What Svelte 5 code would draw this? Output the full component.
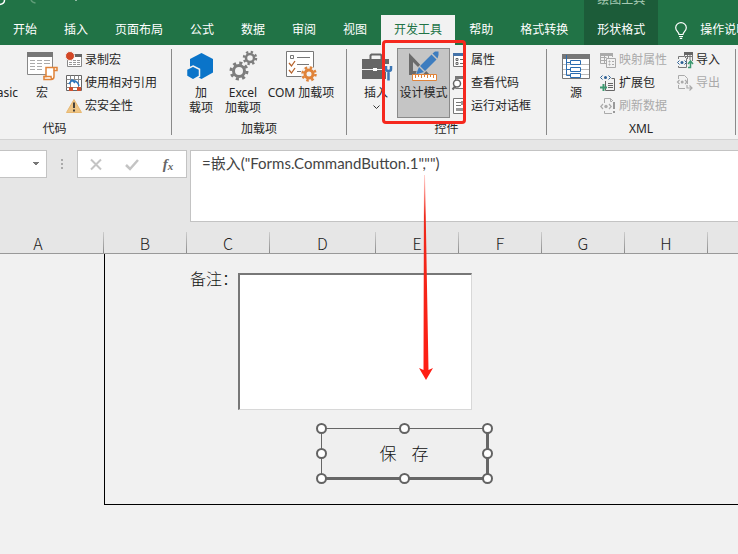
<script>
  const tabs = ['开始', '插入', '页面布局', '公式', '数据', '审阅', '视图', '开发工具', '帮助', '格式转换'];
  const columns = [
    { name: 'A', width: 131 },
    { name: 'B', width: 83 },
    { name: 'C', width: 83 },
    { name: 'D', width: 106 },
    { name: 'E', width: 83 },
    { name: 'F', width: 83 },
    { name: 'G', width: 83 },
    { name: 'H', width: 83 },
    { name: 'I', width: 83 }
  ];
  const handles = [
    [5.5, 5.5], [88.5, 5.5], [171.5, 5.5],
    [5.5, 30.5], [171.5, 30.5],
    [5.5, 55.5], [88.5, 55.5], [171.5, 55.5]
  ];
  let active = $state('开发工具');
  let formula = $state('=嵌入("Forms.CommandButton.1","")');
  let note = $state('');
</script>

{#snippet codeDoc(color, mark)}
  <path d="M4.500 5V.5h6l3 3V15.500h-9V13" fill="none" stroke={color} />
  <path d="M10.500.5v3h3" fill="none" stroke={color} />
  <path d="M3 6 .8 8.500 3 11M9 6l2.200 2.500L9 11" fill="none" stroke={mark} stroke-width="1.200" />
  <circle cx="6" cy="8.500" r="1.700" fill={mark} />
{/snippet}

<div class="app">
  <header class="top">
    <svg class="quick" width="90" height="6" viewBox="0 0 90 6" aria-hidden="true">
      <path d="M0 4.500C3 4 4.500 2.500 4.500 0" fill="none" stroke="#fff" stroke-width="1.500" />
      <path d="M31 0q1 2.500 4.500 3" fill="none" stroke="#5f9c78" stroke-width="1.500" />
      <path d="M75 0h2l-1 1z" fill="#fff" />
    </svg>
    <nav class="tabs">
      {#each tabs as tab}
        <button class="tab" class:active={active === tab} onclick={() => (active = tab)}>{tab}</button>
      {/each}
    </nav>
    <div class="context">
      <span class="context-title">绘图工具</span>
      <button class="tab">形状格式</button>
    </div>
    <button class="tell">
      <svg width="12" height="17" viewBox="0 0 12 17" fill="none" stroke="#fff" stroke-width="1.200" aria-hidden="true">
        <path d="M4 12.500c0-2.500-3.300-3.500-3.300-6.800a5.300 5 0 0 1 10.600 0c0 3.300-3.300 4.300-3.300 6.800zM4 14.500h4M4.800 16.300h2.400" />
      </svg>
      <span>操作说明搜索</span>
    </button>
  </header>

  <section class="ribbon">
    <div class="group code">
      <div class="items">
        <button class="big basic"><span class="pic"></span>Visual Basic</button>
        <button class="big macro">
          <svg class="pic" width="32" height="32" viewBox="0 0 32 32" aria-hidden="true">
            <path d="M1.500 3.500h25v22h-25z" fill="#fff" stroke="#888" />
            <path d="M1 3h26v5H1z" fill="#777" />
            <path d="M4 11.500h5m2 0h5m2 0h6M4 14.500h5m2 0h5m2 0h6M4 17.500h5m2 0h5M4 20.500h5m2 0h5" stroke="#aaa" />
            <path d="M20 18.500h11v3h-3v6q0 3-3 3h-7v-3h2z" fill="#fff" stroke="#e08339" stroke-width="1.500" />
            <path d="M17.500 27.500h7.500q0 3 2 2.500M28 21.500v-3" fill="none" stroke="#e08339" stroke-width="1.500" />
          </svg>
          宏
        </button>
        <div class="stack">
          <button class="row">
            <svg width="16" height="16" viewBox="0 0 16 16" aria-hidden="true">
              <path d="M1.500 2.500h14v12h-14z" fill="#fff" stroke="#888" />
              <path d="M8 2h8v3H8z" fill="#666" />
              <path d="M3 8.500h3m1 0h3m1 0h3M3 10.500h3m1 0h3m1 0h3M3 12.500h3m1 0h3m1 0h3" stroke="#999" />
              <circle cx="4" cy="4" r="4.500" fill="#d24726" stroke="#f2f2f2" />
            </svg>
            录制宏
          </button>
          <button class="row">
            <svg width="16" height="16" viewBox="0 0 16 16" aria-hidden="true">
              <path d="M.5.500h15v15H.500z" fill="#fff" stroke="#666" />
              <path d="M.5 4.500h15M4.500.500v15M8.500.500v4M12.500.500v15M.500 8.500h4M.500 12.500h15" stroke="#888" />
              <path d="M5 5h7v7H5z" fill="#fff" />
              <path d="M3 9l3-4 3 3M5.500 6q6-1 7.500 5" fill="none" stroke="#2b76bd" stroke-width="1.500" />
              <path d="M3 12h4v4H3zM11 12h4v4h-4z" fill="#d0502d" />
            </svg>
            使用相对引用
          </button>
          <button class="row">
            <svg width="16" height="16" viewBox="0 0 16 16" aria-hidden="true">
              <path d="M8 1.500 15.500 14.500H.500z" fill="#efc585" stroke="#e8b871" stroke-linejoin="round" />
              <path d="M8 4.500v5.500M8 11.500v2" stroke="#333" stroke-width="1.800" />
            </svg>
            宏安全性
          </button>
        </div>
      </div>
      <div class="caption">代码</div>
    </div>

    <div class="group addins">
      <div class="items">
        <button class="big addin">
          <svg class="pic" width="32" height="32" viewBox="0 0 32 32" aria-hidden="true">
            <path d="M16.500 4 28 10v13.500L16.500 30 5 23.500V10z" fill="#0a74c9" />
            <path d="m8 17 6.500 3.300v6.900L8 31l-6.500-3.800v-6.900z" fill="#0a74c9" stroke="#f2f2f2" stroke-width="1.500" />
          </svg>
          加<br />载项
        </button>
        <button class="big excel">
          <svg class="pic" width="32" height="32" viewBox="0 0 32 32" aria-hidden="true">
            <g fill="none" stroke="#7d7d7d">
              <circle cx="12" cy="22" r="5.500" stroke-width="3" />
              <circle cx="12" cy="22" r="8" stroke-width="3" stroke-dasharray="3.100 3.183" />
              <circle cx="23" cy="9" r="4" stroke-width="2.500" />
              <circle cx="23" cy="9" r="6" stroke-width="2.500" stroke-dasharray="2.300 2.412" />
            </g>
          </svg>
          Excel<br />加载项
        </button>
        <button class="big com">
          <svg class="pic" width="32" height="32" viewBox="0 0 32 32" aria-hidden="true">
            <path d="M1.500 2.500h27v25h-27z" fill="#fff" stroke="#777" />
            <path d="M5.500 6.500h3v3h-3zM12 8.500h13M12 15.500h12M12 22.500h4" fill="none" stroke="#777" />
            <path d="m4 14 2.500 3L10 12M4 21l2.500 3 3.500-5" fill="none" stroke="#b5622b" stroke-width="1.300" />
            <circle cx="24" cy="25" r="8" fill="#f2f2f2" />
            <circle cx="24" cy="25" r="4" fill="none" stroke="#e08339" stroke-width="3" />
            <circle cx="24" cy="25" r="6.500" fill="none" stroke="#e08339" stroke-width="2.500" stroke-dasharray="2.500 2.605" />
          </svg>
          COM 加载项
        </button>
      </div>
      <div class="caption">加载项</div>
    </div>

    <div class="group controls">
      <div class="items">
        <button class="big insert">
          <svg class="pic" width="32" height="32" viewBox="0 0 32 32" aria-hidden="true">
            <path d="M10.500 10V6.500l1-1h9l1 1V10" fill="none" stroke="#666" stroke-width="2" />
            <path d="M2 10h27v20H2z" fill="#666" />
            <path d="M2 20.500h11m4 0h11" stroke="#f2f2f2" />
            <path d="M13 19h4v3h-4z" fill="#fff" />
            <path d="M24 15v5q0 2 2 3v9h5v-9q2-1 2-3v-5z" fill="#f2f2f2" />
            <path d="M26 17v3q0 2 2.500 2t2.500-2v-3M28.500 21.500v10" fill="none" stroke="#3b76b5" stroke-width="2.500" />
          </svg>
          插入
          <svg class="chevron" width="7" height="4" viewBox="0 0 7 4" aria-hidden="true"><path d="m.5.500 3 3 3-3" fill="none" stroke="#333" /></svg>
        </button>
        <button class="big design" aria-pressed="true">
          <svg class="pic" width="32" height="32" viewBox="0 0 32 32" aria-hidden="true">
            <path d="M1 4v22h21zM5 13l9 9H5z" fill="#6b6b6b" fill-rule="evenodd" />
            <path d="m7 27 3-9L25 2.500l7 4L15.500 25z" fill="#c5c5c5" />
            <path d="m8 25.500 3-7.500 5 5zM12 17 23.500 5.500l5 5L17 22zM24.500 4.500 27 2.500h3.500V6l-1 3.500z" fill="#3e7dbf" />
            <path d="M4.500 25.500h24v6h-24z" fill="#fff" stroke="#e08339" />
            <path d="M7.500 26v3m3-3v2m3-2v3m3-3v2m3-2v3m3-3v2m3-2v3" stroke="#e08339" />
          </svg>
          设计模式
        </button>
        <div class="stack">
          <button class="row">
            <svg width="16" height="16" viewBox="0 0 16 16" aria-hidden="true">
              <path d="M1.500 1.500h12v13h-12z" fill="#fff" stroke="#777" />
              <path d="M1 1h13v3H1z" fill="#4472a8" />
              <path d="M4 6.500h2v2H4zM4 10.500h2v2H4zM8 7.500h4M8 11.500h4" fill="none" stroke="#666" />
            </svg>
            属性
          </button>
          <button class="row">
            <svg width="16" height="16" viewBox="0 0 16 16" aria-hidden="true">
              <path d="M3.500 1.500h10v12h-10z" fill="#fff" stroke="#777" />
              <path d="M3 1h11v3H3z" fill="#777" />
              <circle cx="5" cy="8.500" r="3.500" fill="#fff" stroke="#666" stroke-width="1.500" />
              <path d="m3 11.500-2.500 3" stroke="#666" stroke-width="2" />
            </svg>
            查看代码
          </button>
          <button class="row">
            <svg width="16" height="16" viewBox="0 0 16 16" aria-hidden="true">
              <path d="M1.500.500h12v15h-12z" fill="#fff" stroke="#777" />
              <path d="M4 4.500h5M4 7.500h5M4 10.500h4" stroke="#777" />
              <path d="M4 10h8v3H4zM9 3h3v4H9z" fill="#999" />
            </svg>
            运行对话框
          </button>
        </div>
      </div>
      <div class="caption">控件</div>
    </div>

    <div class="group xml">
      <div class="items">
        <button class="big source">
          <svg class="pic" width="32" height="32" viewBox="0 0 32 32" aria-hidden="true">
            <path d="M2.500 5.500h27v24h-27z" fill="#fff" stroke="#777" />
            <path d="M2 5h28v5H2z" fill="#777" />
            <path d="M3 15.500h26M3 20.500h26M3 25.500h26" stroke="#bbb" />
            <path d="M6.500 6v20.500H11M6.500 13.500H11M6.500 20.500H11" fill="none" stroke="#2b6cb0" />
            <path d="M10.500 11.500h10v4h-10zM10.500 18.500h10v4h-10zM10.500 24.500h10v4h-10z" fill="#fff" stroke="#2b6cb0" />
          </svg>
          源
        </button>
        <div class="stack second">
          <button class="row" disabled>
            <svg width="16" height="16" viewBox="0 0 16 16" fill="none" stroke="#aaa" aria-hidden="true">
              <path d="M6 11.500H.500v-10h12V5M.500 5.500h6M4.500 4v7M.500 8.500h6M8.500 4v2" />
              <path d="M0 1h13v3H0z" fill="#aaa" stroke="none" />
              <path d="M6.500 6.500h9v9h-9zM9 9h1v1H9zM9 12h1v1H9zM12 9.500h2M12 12.500h2" />
            </svg>
            映射属性
          </button>
          <button class="row">
            <svg width="16" height="16" viewBox="0 0 16 16" fill="none" aria-hidden="true">
              <path d="M5.500 6v9.500h9v-12h-3M8 8.500h5M8 10.500h5M8 12.500h5" stroke="#666" />
              <path d="M2.500.500.500 2.500l2 2M8.500.500l2 2-2 2" stroke="#2b5f94" />
              <circle cx="5.500" cy="2.500" r="1.500" fill="#2b5f94" />
              <path d="M3.500 9v7M0 12.500h7" stroke="#3d9970" stroke-width="2" />
            </svg>
            扩展包
          </button>
          <button class="row" disabled>
            <svg width="16" height="16" viewBox="0 0 16 16" aria-hidden="true">
              {@render codeDoc('#aaa', '#aaa')}
              <path d="M12 3h4v13h-4z" fill="#f2f2f2" />
              <path d="M14 4v7M14 13v2" stroke="#999" stroke-width="2" />
            </svg>
            刷新数据
          </button>
        </div>
        <div class="stack third">
          <button class="row">
            <svg width="16" height="16" viewBox="0 0 16 16" fill="none" aria-hidden="true">
              <path d="M7.500 4V1.500h8V9M8 4.500h7M10.500 2v5M13 2v6" stroke="#777" />
              <path d="M7 0h9v3H7z" fill="#666" />
              <path d="M1.500 7V4.500h6l2 2V15.500h-8V14" stroke="#777" />
              <path d="M2.500 8.500.500 10.500l2 2M7.500 8.500l2 2-2 2" stroke="#2b5f94" />
              <circle cx="5" cy="10.500" r="1.500" fill="#2b5f94" />
              <path d="M11 15.500h2.500V10M11 12l2.500-3 2.500 3" stroke="#3d9970" stroke-width="1.500" />
            </svg>
            导入
          </button>
          <button class="row" disabled>
            <svg width="16" height="16" viewBox="0 0 16 16" aria-hidden="true">
              <path d="M1.500 4V.500h6l3 3V9M1.500 10v3.500H8" fill="none" stroke="#aaa" />
              <path d="m2.500 5-2 2 2 2M8 5l2 2-2 2M10 10v3h5M12.500 10.500l2.500 2.500-2.500 2.500" fill="none" stroke="#aaa" stroke-width="1.200" />
              <circle cx="5.200" cy="7" r="1.500" fill="#aaa" />
            </svg>
            导出
          </button>
        </div>
      </div>
      <div class="caption">XML</div>
    </div>
  </section>

  <section class="formula-bar">
    <select class="name-box" aria-label="名称框"><option></option></select>
    <svg class="grip" width="2" height="11" viewBox="0 0 2 11" aria-hidden="true"><path d="M0 0h2v2H0zM0 4h2v2H0zM0 8h2v2H0z" fill="#aaa" /></svg>
    <div class="tools">
      <button aria-label="取消"><svg width="12" height="11" viewBox="0 0 12 11"><path d="m1 .5 10 10M11 .5 1 10.500" stroke="#c4c4c4" stroke-width="2" /></svg></button>
      <button aria-label="输入"><svg width="14" height="11" viewBox="0 0 14 11"><path d="m1 6 4 4 8-9" fill="none" stroke="#c4c4c4" stroke-width="2.500" /></svg></button>
      <button class="fx" aria-label="插入函数">f<small>x</small></button>
    </div>
    <textarea class="formula" aria-label="编辑栏" spellcheck="false" bind:value={formula}></textarea>
  </section>

  <div class="columns">
    {#each columns as col}
      <div class="col" style:width="{col.width}px">{col.name}</div>
    {/each}
  </div>

  <main class="sheet">
    <div class="frame"></div>
    <div class="field">
      <label for="note">备注：</label>
      <textarea id="note" bind:value={note}></textarea>
    </div>
    <div class="shape">
      <button class="save">保&nbsp;&nbsp;&nbsp; 存</button>
      <svg class="handles" width="178" height="62" viewBox="0 0 178 62" aria-hidden="true">
        {#each handles as [x, y]}
          <circle cx={x} cy={y} r="4.500" fill="#fff" stroke="#636363" stroke-width="2" />
        {/each}
      </svg>
    </div>
  </main>

  <div class="highlight"></div>
  <svg class="arrow" width="16" height="206" viewBox="0 0 16 206" aria-hidden="true">
    <defs>
      <linearGradient id="fade" x1="0" y1="0" x2="0" y2="1">
        <stop offset="0" stop-color="#ff2a1c" stop-opacity="0.200" />
        <stop offset="0.200" stop-color="#ee2a1c" />
        <stop offset="1" stop-color="#ff1e14" />
      </linearGradient>
    </defs>
    <path d="M6 0h1l3.500 195 4.500-2-7 12-7-12 4.500 2z" fill="url(#fade)" />
  </svg>
</div>

<style>
  :global(body) {
    background: #f1f1f1;
    overflow: hidden;
  }
  .app {
    position: relative;
    display: flex;
    flex-direction: column;
    min-height: 100vh;
    overflow: hidden;
    font: 12px/15px 'Noto Sans', 'Noto Sans CJK SC', sans-serif;
    color: #262626;
  }
  button {
    font: inherit;
    color: inherit;
    background: none;
    border: 0;
    padding: 0;
    white-space: nowrap;
  }
  svg {
    display: block;
    flex: none;
    overflow: visible;
  }
  .top {
    position: relative;
    display: flex;
    align-items: flex-end;
    height: 45px;
    background: #217346;
    color: #fff;
  }
  .quick {
    position: absolute;
    left: 0;
    top: 0;
  }
  .tabs {
    display: flex;
    gap: 1px;
  }
  .tab {
    height: 30px;
    padding: 0 13px 2px;
  }
  .tab.active {
    background: #f2f2f2;
    color: #217346;
  }
  .context {
    display: flex;
    flex-direction: column;
    margin-left: 3px;
    background: #1c5c39;
  }
  .context-title {
    height: 30px;
    line-height: 30px;
    text-align: center;
    color: #a5c9b3;
  }
  .tell {
    display: flex;
    align-items: center;
    gap: 13px;
    height: 30px;
    padding-left: 17px;
  }
  .tell span {
    padding-bottom: 2px;
  }
  .ribbon {
    display: flex;
    height: 94px;
    margin-left: -62px;
    background: #f2f2f2;
    border-bottom: 1px solid #d2d2d2;
  }
  .group {
    position: relative;
    display: flex;
    flex-direction: column;
    flex: none;
    padding-top: 3px;
  }
  .group::after {
    content: '';
    position: absolute;
    right: 0;
    top: 4px;
    bottom: 4px;
    width: 1px;
    background: #8a8a8a;
  }
  .code {
    width: 234px;
  }
  .addins {
    width: 175px;
  }
  .controls {
    width: 200px;
  }
  .xml {
    width: 189px;
  }
  .items {
    display: flex;
    height: 70px;
  }
  .caption {
    padding: 3px 1px 0 0;
    text-align: center;
  }
  .big {
    display: flex;
    flex-direction: column;
    align-items: center;
    height: 70px;
    padding-top: 1px;
  }
  .pic {
    height: 32px;
    margin-bottom: 4px;
  }
  .basic {
    width: 80px;
    align-items: flex-end;
  }
  .macro {
    width: 48px;
  }
  .addin {
    width: 40px;
    margin-left: 9px;
  }
  .excel {
    width: 44px;
  }
  .com {
    width: 72px;
  }
  .insert {
    width: 42px;
    margin-left: 8px;
  }
  .chevron {
    margin-top: 5px;
  }
  .design {
    width: 53px;
    background: #c5c5c5;
    outline: 1px solid #8a8a8a;
    outline-offset: -1px;
  }
  .source {
    width: 40px;
    margin-left: 9px;
  }
  .stack {
    display: flex;
    flex-direction: column;
  }
  .second {
    margin-left: 4px;
  }
  .third {
    margin-left: 10px;
  }
  .controls .stack {
    margin-left: 2px;
  }
  .row {
    display: flex;
    align-items: center;
    gap: 3px;
    height: 23px;
  }
  .row:disabled {
    color: #aaa;
  }
  .formula-bar {
    display: flex;
    align-items: flex-start;
    padding: 10px 0;
    background: #e6e6e6;
  }
  .name-box {
    appearance: none;
    width: 47px;
    height: 28px;
    border: 1px solid #c3c3c3;
    border-left: 0;
    border-radius: 0;
    background:
      linear-gradient(to bottom left, #777 50%, transparent 50%) 32px 11px / 4px 4px no-repeat,
      linear-gradient(to bottom right, #777 50%, transparent 50%) 36px 11px / 4px 4px no-repeat,
      #fff;
  }
  .grip {
    margin: 9px 14px 0;
  }
  .tools {
    display: flex;
    width: 110px;
    height: 28px;
    box-sizing: border-box;
    border: 1px solid #c3c3c3;
    background: #fff;
  }
  .tools button {
    display: flex;
    flex: 1;
    align-items: center;
    justify-content: center;
  }
  .tools .fx {
    font: italic bold 15px/20px 'Liberation Serif', serif;
    color: #666;
  }
  .fx small {
    font-size: 11px;
    padding-top: 3px;
  }
  .formula {
    flex: 1;
    height: 72px;
    box-sizing: border-box;
    margin-left: 3px;
    padding: 1px 11px;
    border: 1px solid #c3c3c3;
    border-right: 0;
    resize: none;
    background: #fff;
    color: #444;
    font: 15px/22px Lato, 'Noto Sans CJK SC', sans-serif;
  }
  .columns {
    display: flex;
    height: 21px;
    margin-left: -27px;
    background: #e6e6e6;
    border-bottom: 1px solid #999;
    overflow: hidden;
  }
  .col {
    flex: none;
    box-sizing: border-box;
    border-right: 1px solid;
    border-image: linear-gradient(#d0d0d0, #888) 1;
    text-align: center;
    font: 300 16px/23px 'Noto Sans CJK SC', sans-serif;
    color: #222;
  }
  .sheet {
    position: relative;
    flex: 1;
    min-height: 300px;
    background: #f1f1f1;
  }
  .frame {
    height: 250px;
    margin-left: 104px;
    border-left: 1px solid #000;
    border-bottom: 1px solid #000;
  }
  .field {
    position: absolute;
    left: 190px;
    top: 19px;
    display: flex;
  }
  .field label {
    width: 48px;
    font: 300 16px/10px 'Noto Sans CJK SC', sans-serif;
    color: #111;
  }
  .field textarea {
    width: 234px;
    height: 137px;
    box-sizing: border-box;
    border: 2px solid #777;
    border-right: 1px solid #d8d8d8;
    border-bottom: 1px solid #d8d8d8;
    resize: none;
    background: #fff;
  }
  .shape {
    position: absolute;
    left: 321px;
    top: 174px;
  }
  .save {
    width: 168px;
    height: 52px;
    border: 1px solid #666;
    border-right-width: 3px;
    border-bottom-width: 3px;
    background: #efefef;
    font: 300 17px/24px 'Noto Sans CJK SC', sans-serif;
    color: #111;
  }
  .handles {
    position: absolute;
    left: -5px;
    top: -5px;
  }
  .highlight {
    position: absolute;
    left: 382px;
    top: 40px;
    width: 84px;
    height: 84px;
    box-sizing: border-box;
    border: 3px solid #f5281e;
    border-radius: 4px;
    pointer-events: none;
  }
  .arrow {
    position: absolute;
    left: 418px;
    top: 175px;
    pointer-events: none;
  }
</style>
